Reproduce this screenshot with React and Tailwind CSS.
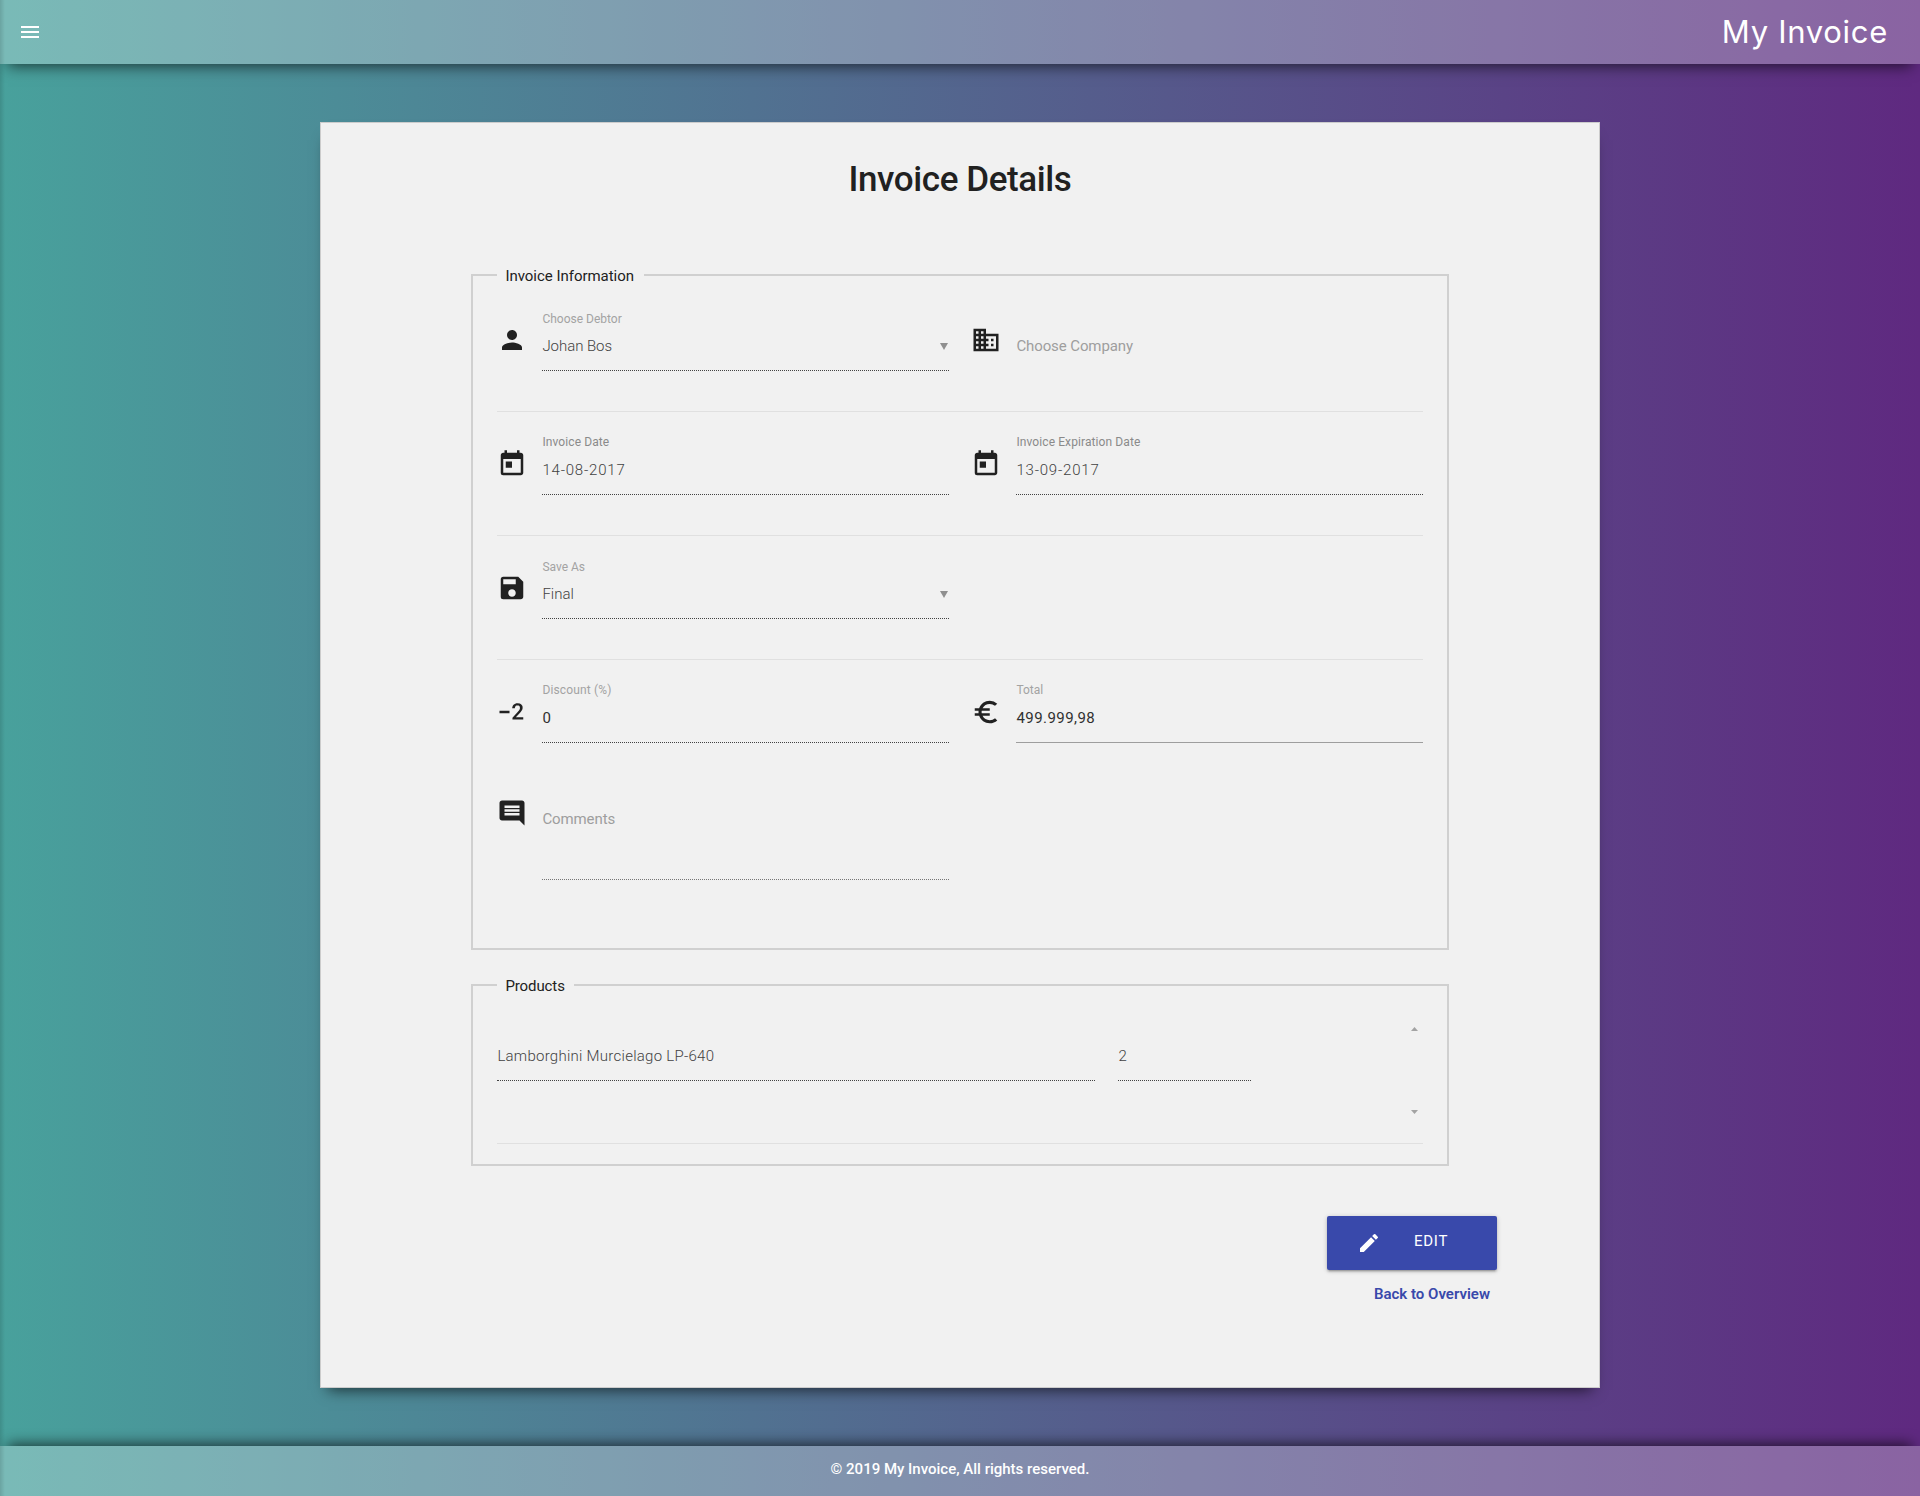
import React from "react";
import {
  MdMenu,
  MdPerson,
  MdBusiness,
  MdToday,
  MdSave,
  MdExposureNeg2,
  MdEuroSymbol,
  MdInsertComment,
  MdEdit,
} from "react-icons/md";

function Panel({ title, legendClass, className, children }) {
  return (
    <section className={`mx-auto w-[978px] border-2 border-[#d0d0d0] pr-6 pl-[24.4px] ${className}`}>
      <h2
        className={`-mt-2.5 -mb-2.5 h-5 bg-[#f1f1f1] pl-2 text-[15px] leading-5 whitespace-nowrap text-[#212121] ${legendClass}`}
      >
        {title}
      </h2>
      {children}
    </section>
  );
}

function Field({
  icon: Icon,
  label,
  labelClass = "pt-[3px] text-[#8f8f8f]",
  value,
  valueClass = "text-[#424242] font-light",
  line = "border-b border-dotted border-[#424242]",
  arrow,
}) {
  return (
    <div className="flex h-16">
      <div className="w-[45px] shrink-0 pt-[18px]">
        <Icon className="size-[30px] text-[#212121]" />
      </div>
      <div className={`flex w-[407px] flex-col ${line}`}>
        <div className={`h-[29px] text-xs leading-4 ${labelClass}`}>{label}</div>
        <div className="flex h-5 items-center justify-between">
          <span className={`text-[15px] leading-5 ${valueClass}`}>{value}</span>
          {arrow && (
            <svg className="mr-px h-[7px] w-2 fill-[#8f8f8f]" viewBox="0 0 8 7">
              <path d="M0 0h8L4 7z" />
            </svg>
          )}
        </div>
      </div>
    </div>
  );
}

function Row({ className = "h-[124px] pt-[19px] border-b", children }) {
  return <div className={`flex gap-[22px] border-[#e0e0e0] ${className}`}>{children}</div>;
}

export default function App() {
  return (
    <div className="relative flex h-[1496px] w-[1920px] flex-col bg-linear-[90deg,#48a19c,#5f2980] font-[Roboto,sans-serif]">
      <header className="flex h-16 shrink-0 items-center justify-between bg-white/27 pr-8 pl-[18px] text-white shadow-[0_10px_14px_-8px_rgba(0,0,0,0.65)]">
        <MdMenu className="size-6" />
        <span className="font-[Inter,sans-serif] text-[31px] leading-10 tracking-[0.7px]">My Invoice</span>
      </header>

      <main className="mx-auto mt-[58px] h-[1266px] w-[1280px] shrink-0 border border-[#cccccc] bg-[#f1f1f1] pt-[37px] shadow-[0_10px_14px_-8px_rgba(0,0,0,0.65)]">
        <h1 className="text-center text-[35px] leading-10 font-medium tracking-[-0.4px] text-[#212121]">
          Invoice Details
        </h1>

        <Panel title="Invoice Information" legendClass="w-[147px] tracking-[-0.03px]" className="mt-[74px] h-[676px]">
          <Row className="h-[136px] border-b pt-[31px]">
            <Field
              icon={MdPerson}
              label="Choose Debtor"
              labelClass="pt-1 text-[#a3a3a3]"
              value="Johan Bos"
              valueClass="text-[#424242] font-light tracking-[-0.05px]"
              arrow
            />
            <Field
              icon={MdBusiness}
              value="Choose Company"
              valueClass="text-[#9e9e9e] tracking-[-0.1px]"
              line=""
            />
          </Row>
          <Row>
            <Field
              icon={MdToday}
              label="Invoice Date"
              labelClass="pt-[3px] text-[#8a8a8a] tracking-[0.1px]"
              value="14-08-2017"
              valueClass="text-[#424242] font-light tracking-[0.8px]"
            />
            <Field
              icon={MdToday}
              label="Invoice Expiration Date"
              labelClass="pt-[3px] text-[#8a8a8a] tracking-[0.1px]"
              value="13-09-2017"
              valueClass="text-[#424242] font-light tracking-[0.8px]"
            />
          </Row>
          <Row>
            <Field icon={MdSave} label="Save As" labelClass="pt-1 text-[#a3a3a3]" value="Final" arrow />
          </Row>
          <Row className="h-[83px] pt-[19px]">
            <Field
              icon={MdExposureNeg2}
              label="Discount (%)"
              labelClass="pt-[3px] text-[#a3a3a3] tracking-[0.15px]"
              value="0"
              valueClass="text-[#303030]"
            />
            <Field
              icon={MdEuroSymbol}
              label="Total"
              labelClass="pt-[3px] text-[#a3a3a3]"
              value="499.999,98"
              valueClass="text-[#303030] tracking-[0.45px]"
              line="border-b border-[#9e9e9e]"
            />
          </Row>
          <div className="mt-9 flex h-[101px]">
            <div className="w-[45px] pt-[19px]">
              <MdInsertComment className="size-[30px] text-[#212121]" />
            </div>
            <div className="w-[407px] border-b border-dotted border-[#757575] pt-[30px] text-[15px] leading-5 tracking-[-0.1px] text-[#9e9e9e]">
              Comments
            </div>
          </div>
        </Panel>

        <Panel title="Products" legendClass="w-[77px] tracking-[-0.1px]" className="mt-[34px] h-[182px]">
          <div className="flex h-[158px] border-b border-[#e0e0e0] text-[15px] leading-5 font-light text-[#424242]">
            <div className="mt-[60px] h-[35px] w-[598px] border-b border-dotted border-[#424242] tracking-[0.26px]">
              Lamborghini Murcielago LP-640
            </div>
            <div className="mt-[60px] ml-[23px] h-[35px] w-[133px] border-b border-dotted border-[#424242]">2</div>
            <div className="mt-[41px] mr-[5px] ml-auto flex h-[87px] flex-col justify-between">
              <svg className="h-1 w-[7px] fill-[#a3a3a3]" viewBox="0 0 7 4">
                <path d="M3.5 0L7 4H0z" />
              </svg>
              <svg className="h-1 w-[7px] fill-[#a3a3a3]" viewBox="0 0 7 4">
                <path d="M0 0h7L3.5 4z" />
              </svg>
            </div>
          </div>
        </Panel>

        <div className="mt-[50px] mr-[102px] flex flex-col items-end">
          <button className="flex h-[54px] w-[170px] items-start gap-[33px] rounded-xs bg-[#3949ab] pt-[15px] pl-[30px] text-[15px] leading-5 tracking-[0.75px] text-white shadow-[0_2px_2px_0_rgba(0,0,0,0.14),0_3px_1px_-2px_rgba(0,0,0,0.12),0_1px_5px_0_rgba(0,0,0,0.2)]">
            <MdEdit className="size-6" />
            EDIT
          </button>
          <a className="mt-3.5 mr-[7px] text-[15px] leading-5 font-semibold text-[#3949ab]">Back to Overview</a>
        </div>
      </main>

      <footer className="mt-auto h-[50px] shrink-0 bg-white/27 pt-[13px] text-center text-[15px] leading-5 font-medium text-white shadow-[0_-10px_14px_-8px_rgba(0,0,0,0.65)]">
        © 2019 My Invoice, All rights reserved.
      </footer>

      {/* Shadow of the closed side navigation */}
      <div className="absolute inset-y-0 left-0 w-[5px] bg-linear-to-r from-black/12 to-transparent" />
    </div>
  );
}
